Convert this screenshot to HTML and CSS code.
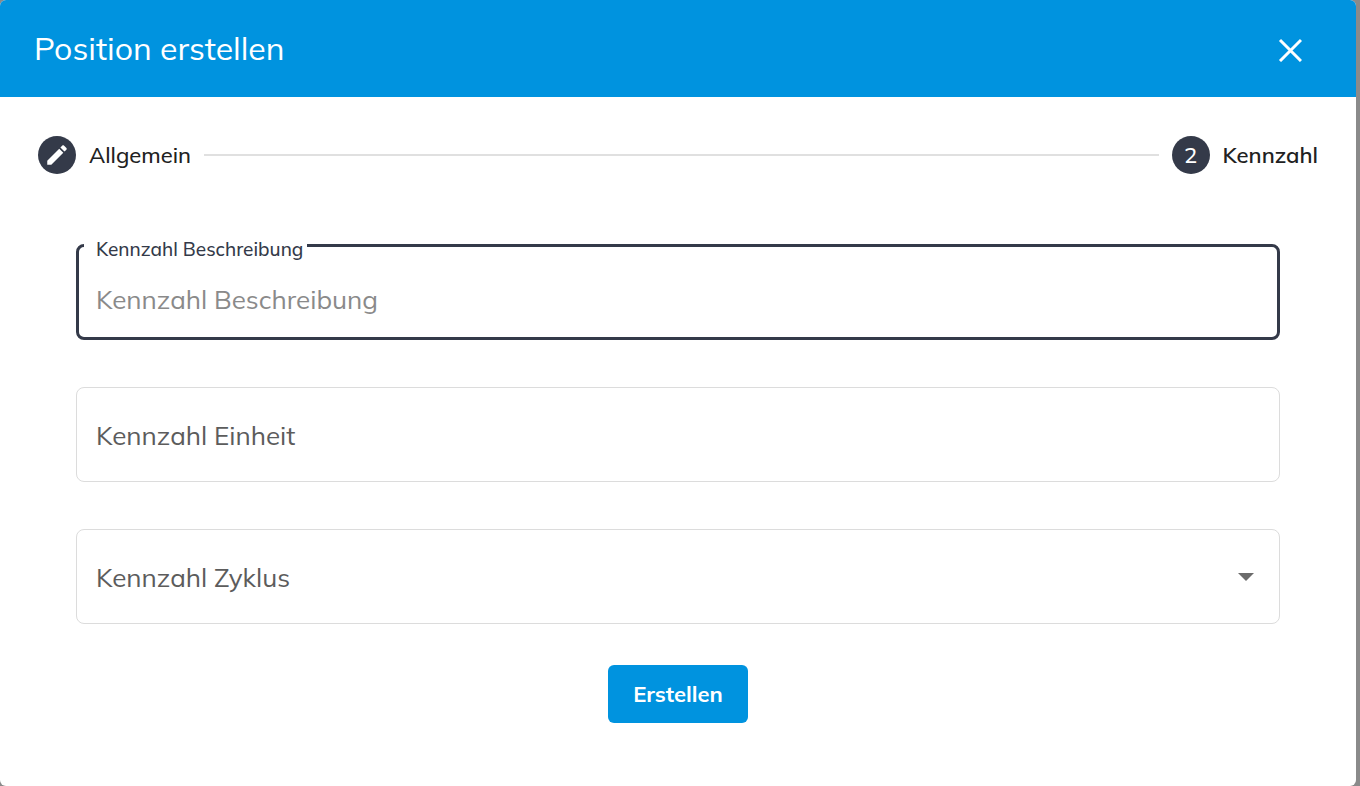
FILE: index.html
```html
<!DOCTYPE html>
<html lang="de">
<head>
    <meta charset="UTF-8">
    <meta name="viewport" content="width=device-width, initial-scale=1.0">
    <title>Position erstellen</title>
    <link rel="stylesheet" href="styles.css">
</head>
<body>
    <main class="dialog" role="dialog" aria-labelledby="dialogTitle">
        <header class="dialog-header">
            <h1 id="dialogTitle">Position erstellen</h1>
            <button type="button" class="close-btn" aria-label="Schließen">
                <svg viewBox="0 0 24 24" width="24" height="24" fill="none" stroke="currentColor" stroke-width="3">
                    <path d="M2 2l21 21M23 2l-21 21"/>
                </svg>
            </button>
        </header>

        <div class="stepper">
            <div class="step">
                <span class="step-icon">
                    <svg viewBox="0 0 24 24" width="26" height="26" fill="currentColor">
                        <path d="M3 17.25V21h3.75L17.81 9.94l-3.75-3.75L3 17.25zM20.71 7.04c.39-.39.39-1.02 0-1.41l-2.34-2.34c-.39-.39-1.02-.39-1.41 0l-1.83 1.83 3.75 3.75 1.83-1.83z"/>
                    </svg>
                </span>
                <span class="step-label">Allgemein</span>
            </div>
            <div class="step-line"></div>
            <div class="step">
                <span class="step-icon">2</span>
                <span class="step-label active">Kennzahl</span>
            </div>
        </div>

        <form class="form">
            <div class="field focused">
                <input type="text" id="beschreibung" placeholder="Kennzahl Beschreibung">
                <label for="beschreibung">Kennzahl Beschreibung</label>
            </div>
            <div class="field">
                <input type="text" id="einheit">
                <label for="einheit">Kennzahl Einheit</label>
            </div>
            <div class="field">
                <select id="zyklus">
                    <option value=""></option>
                </select>
                <label for="zyklus">Kennzahl Zyklus</label>
                <svg class="arrow" viewBox="0 0 16 8" width="16" height="8" fill="currentColor">
                    <path d="M0 0h16L8 8z"/>
                </svg>
            </div>
            <button type="button" class="submit-btn">Erstellen</button>
        </form>
    </main>
</body>
</html>
```
FILE: styles.css
```css
* {
    box-sizing: border-box;
}

body {
    margin: 0;
    padding-right: 4px;
    background-color: #8a8a8a;
    font-family: Mulish, Muli, Lato, sans-serif;
    font-weight: 500;
    color: #212121;
}

.dialog {
    display: flex;
    flex-direction: column;
    min-height: 100vh;
    background-color: #fff;
    border-radius: 6px;
    overflow: hidden;
}

.dialog-header {
    display: flex;
    align-items: center;
    justify-content: space-between;
    padding: 26px 48px 23px 34px;
    background-color: #0093df;
    color: #fff;
}

.dialog-header h1 {
    margin: 0;
    padding-bottom: 4px;
    font-size: 32px;
    line-height: 44px;
    font-weight: 400;
}

.close-btn {
    display: flex;
    padding: 6px;
    border: none;
    background: none;
    color: inherit;
    cursor: pointer;
}

/* Stepper */
.stepper {
    display: flex;
    align-items: center;
    gap: 13px;
    padding: 39px 38px 0;
}

.step {
    display: flex;
    align-items: center;
    gap: 13px;
    font-size: 22px;
    line-height: 38px;
}

.step-icon {
    display: flex;
    align-items: center;
    justify-content: center;
    width: 38px;
    height: 38px;
    border-radius: 50%;
    background-color: #343a49;
    color: #fff;
}

.step-label.active {
    font-weight: 600;
}

.step-line {
    flex: 1;
    height: 2px;
    background-color: #e0e0e0;
}

/* Formular */
.form {
    display: flex;
    flex-direction: column;
    align-items: center;
    gap: 47px;
    padding: 70px 76px 63px;
}

.field {
    position: relative;
    width: 100%;
}

.field input,
.field select {
    display: block;
    width: 100%;
    height: 95px;
    padding: 16px 19px 14px;
    border: 1px solid #dcdcdc;
    border-radius: 8px;
    background-color: #fff;
    font-family: inherit;
    font-size: 26px;
    color: #212121;
    outline: none;
    appearance: none;
}

.field label {
    position: absolute;
    top: 32px;
    left: 20px;
    font-size: 26px;
    line-height: 34px;
    font-weight: 400;
    color: #5c5c5c;
    pointer-events: none;
}

.field.focused input {
    height: 96px;
    padding: 22px 17px 8px;
    border: 3px solid #343a49;
}

.field.focused input::placeholder {
    color: #8a8a8a;
}

.field.focused label {
    top: -7px;
    left: 8px;
    padding: 0 4px 0 12px;
    background-color: #fff;
    font-size: 19px;
    line-height: 24px;
    font-weight: 500;
    color: #343a49;
}

.arrow {
    position: absolute;
    top: 44px;
    right: 26px;
    color: #6b6b6b;
    pointer-events: none;
}

.submit-btn {
    margin-top: -6px;
    padding: 0 25px;
    border: none;
    border-radius: 6px;
    background-color: #0093df;
    color: #fff;
    font-family: inherit;
    font-size: 22px;
    line-height: 58px;
    font-weight: 700;
    cursor: pointer;
}
```
